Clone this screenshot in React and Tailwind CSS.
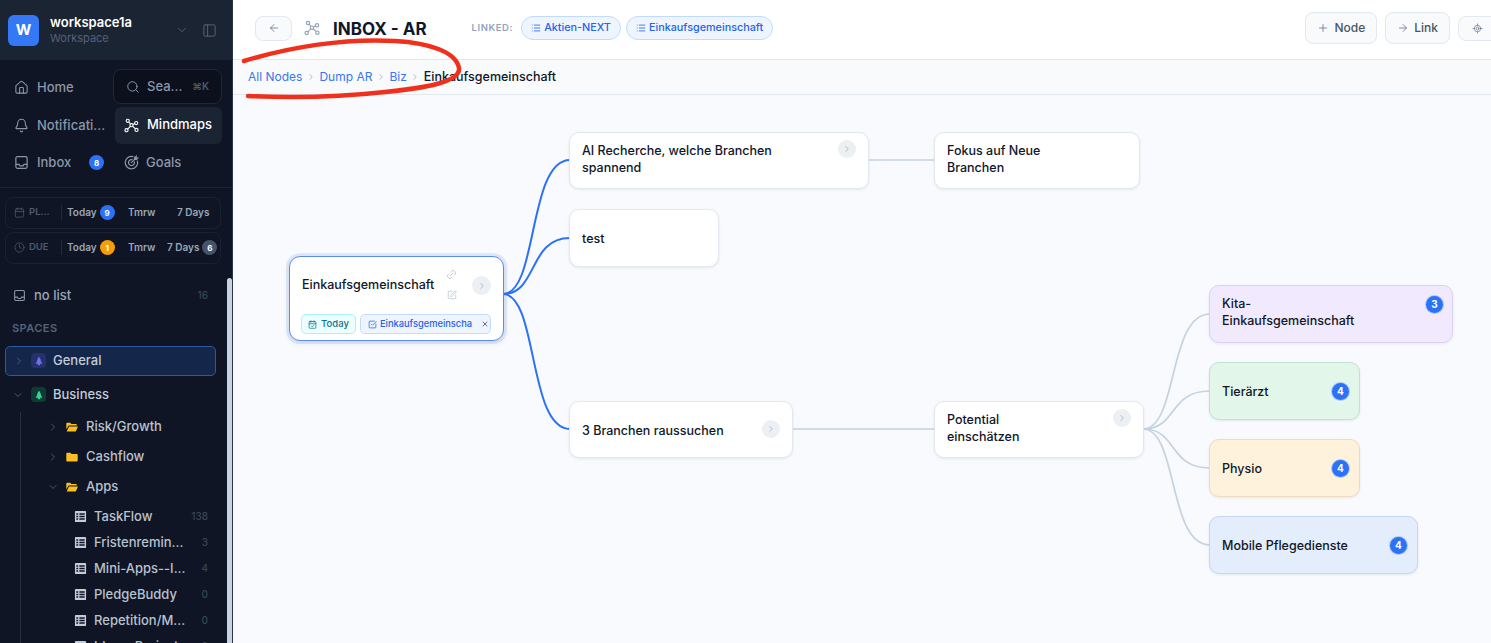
import { ArrowLeft, ArrowRight, Bell, Calendar, CalendarCheck, CheckSquare, ChevronDown, ChevronRight, Clock, Home, Link2, List, LocateFixed, PanelLeft, Plus, Search, SquarePen, X } from 'lucide-react'

function MindmapIcon({ className }) {
  return (
    <svg viewBox="0 0 24 24" fill="none" stroke="currentColor" strokeWidth="1.8" className={className}>
      <circle cx="6" cy="4.5" r="2.5" />
      <circle cx="19.5" cy="8" r="2.5" />
      <circle cx="12" cy="11.5" r="2.5" />
      <circle cx="20" cy="19" r="2.5" />
      <circle cx="4" cy="19.5" r="2.5" />
      <path d="M7.5 6.5l3 3M17.2 9l-2.8 1.4M14 13.5l4 3.6M10.2 13.3l-4.4 4.4" />
    </svg>
  )
}

function TrayIcon({ className }) {
  return (
    <svg viewBox="0 0 16 16" fill="none" stroke="currentColor" strokeWidth="1.3" strokeLinejoin="round" className={className}>
      <rect x="2" y="1.8" width="12" height="12.4" rx="1.6" />
      <path d="M2 10h3.4l1 1.6h3.2l1-1.6H14" />
    </svg>
  )
}

function GoalIcon({ className }) {
  return (
    <svg viewBox="0 0 16 16" fill="none" stroke="currentColor" strokeWidth="1.3" strokeLinecap="round" className={className}>
      <path d="M9.6 1.7A6.6 6.6 0 1 0 14.3 6.4" />
      <path d="M8.6 4.9A3.2 3.2 0 1 0 11.1 7.4" />
      <path d="M7.8 8.2L13 3M11.2 2.8V4.8H13.2L14.8 3.2H13V1.4Z" />
    </svg>
  )
}

function FolderOpenIcon() {
  return (
    <svg viewBox="0 0 16 16" className="ml-[6px] size-[14px] shrink-0">
      <path d="M1.5 4a1 1 0 0 1 1-1h3.4l1.4 1.5h5.2a1 1 0 0 1 1 1V6.4H4.2L1.5 10.5z" fill="#fbbf24" />
      <path d="M4.6 7.4h10.2l-2.2 5.1a1 1 0 0 1-.9.5H1.9z" fill="#fbbf24" />
    </svg>
  )
}

function FolderClosedIcon() {
  return (
    <svg viewBox="0 0 16 16" className="ml-[6px] size-[14px] shrink-0">
      <path d="M1.5 4a1 1 0 0 1 1-1h3.6l1.4 1.6h6a1 1 0 0 1 1 1V12a1 1 0 0 1-1 1h-11a1 1 0 0 1-1-1z" fill="#fbbf24" />
    </svg>
  )
}

function SpaceIcon({ className }) {
  return (
    <svg viewBox="0 0 12 12" className={className} fill="currentColor">
      <path d="M6 .8C7.4 2.2 8 3.8 8.2 5.6L10 9.4H7.4V11H4.6V9.4H2L3.8 5.6C4 3.8 4.6 2.2 6 .8Z" />
    </svg>
  )
}

function TableIcon() {
  return (
    <svg viewBox="0 0 14 14" className="size-[13px] shrink-0 text-[#c3ccd9]" fill="currentColor">
      <path d="M2 1h10a1 1 0 0 1 1 1v10a1 1 0 0 1-1 1H2a1 1 0 0 1-1-1V2a1 1 0 0 1 1-1zm.5 2.4v1.6h2V3.4zm3.3 0v1.6h5.7V3.4zM2.5 6.2v1.6h2V6.2zm3.3 0v1.6h5.7V6.2zM2.5 9v1.6h2V9zm3.3 0v1.6h5.7V9z" fillRule="evenodd" />
    </svg>
  )
}

function NavItem({ icon: Icon, label, badge }) {
  return (
    <div className="flex h-[37.5px] items-center pl-[14px] text-[13px] font-medium text-[#8b97a9]">
      <Icon className="size-[15px] shrink-0" strokeWidth={1.7} />
      <span className="ml-2 truncate">{label}</span>
      {badge && <span className="ml-[18px] grid size-[15px] shrink-0 place-items-center rounded-full bg-[#2b72f6] text-[8px] font-bold text-white">{badge}</span>}
    </div>
  )
}

function DueRow({ icon: Icon, label, today, todayColor, week }) {
  return (
    <div className="flex h-[32px] items-center rounded-lg border border-[#1a2232] pl-2 text-[10px] font-semibold text-[#9aa6b8]">
      <Icon className="size-[11px] shrink-0 text-[#4d596b]" strokeWidth={1.7} />
      <span className="ml-1 w-[32px] text-[9.5px] text-[#4f5b6e]">{label}</span>
      <span className="mr-[5px] h-[15px] w-px bg-[#222b3b]" />
      <span className="flex w-[56px] items-center gap-[3px]">
        Today
        <span className={`grid size-[15px] shrink-0 place-items-center rounded-full text-[8px] font-bold text-white ${todayColor}`}>{today}</span>
      </span>
      <span className="ml-[5px] w-[35px]">Tmrw</span>
      <span className={`flex items-center gap-[3px] ${week ? 'ml-[4px]' : 'ml-[14px]'}`}>
        7 Days
        {week && <span className="grid size-[15px] place-items-center rounded-full bg-[#46536a] text-[8px] font-bold text-white">{week}</span>}
      </span>
    </div>
  )
}

function FolderRow({ label, open, expanded }) {
  const Chev = expanded ? ChevronDown : ChevronRight
  return (
    <div className="flex h-[30px] items-center pl-[47px] text-[13px] font-medium text-[#b9c2cf]">
      <Chev className="size-[12px] text-[#4f5b6e]" strokeWidth={1.8} />
      {open ? <FolderOpenIcon /> : <FolderClosedIcon />}
      <span className="ml-[7px]">{label}</span>
    </div>
  )
}

function ListRow({ label, count }) {
  return (
    <div className="flex h-[26px] items-center pl-[74px] pr-[24px] text-[13px] font-medium text-[#b9c2cf]">
      <TableIcon />
      <span className="ml-[7px] w-[92px] truncate">{label}</span>
      <span className="ml-auto text-[10px] text-[#394557]">{count}</span>
    </div>
  )
}

function Sidebar() {
  return (
    <aside className="relative flex h-[643px] w-[233px] shrink-0 flex-col overflow-hidden border-r border-[#2a3444] bg-[#0f1524]">
      <div className="flex h-[60px] shrink-0 items-center bg-[#1b2433] pl-2 pr-[15px]">
        <div className="grid size-[31px] place-items-center rounded-md bg-[#3478f6] text-[15px] font-bold text-white">W</div>
        <div className="ml-[11px] leading-none">
          <div className="-mt-[1px] text-[13px] font-semibold text-white">workspace1a</div>
          <div className="mt-[4px] text-[11px] text-[#55627a]">Workspace</div>
        </div>
        <ChevronDown className="ml-auto size-[14px] text-[#55627a]" strokeWidth={1.6} />
        <PanelLeft className="ml-[13px] size-[15px] text-[#55627a]" strokeWidth={1.6} />
      </div>

      <div className="grid grid-cols-[113px_109px] border-b border-[#1a2232] pt-[9px] pb-[5px]">
        <NavItem icon={Home} label="Home" />
        <div className="flex h-[35px] items-center rounded-lg border border-[#1f2736] bg-[#0b101c] pl-3 pr-[12px] text-[13px] font-medium text-[#8b97a9]">
          <Search className="size-[14px] shrink-0" strokeWidth={1.7} />
          <span className="ml-[7px]">Sea...</span>
          <span className="ml-auto text-[10px] font-semibold text-[#4f5b6e]">⌘K</span>
        </div>
        <NavItem icon={Bell} label="Notificati..." />
        <div className="ml-[2px] flex h-[37px] items-center rounded-md bg-[#1b2433] pl-[9px] text-[13px] font-medium text-white">
          <MindmapIcon className="size-[15px]" />
          <span className="ml-[8px]">Mindmaps</span>
        </div>
        <NavItem icon={TrayIcon} label="Inbox" badge="8" />
        <div className="flex h-[37.5px] items-center pl-[11px] text-[13px] font-medium text-[#8b97a9]">
          <GoalIcon className="size-[15px]" />
          <span className="ml-[7px]">Goals</span>
        </div>
      </div>

      <div className="flex flex-col gap-[3px] pl-[5px] pr-[11px] pt-[9px]">
        <DueRow icon={Calendar} label="PL..." today="9" todayColor="bg-[#2b72f6]" />
        <DueRow icon={Clock} label="DUE" today="1" todayColor="bg-[#f59e0b]" week="6" />
      </div>

      <div className="mt-[22px] flex h-[22px] items-center pl-[13px] pr-[24px] text-[13px] font-medium text-[#9aa6b8]">
        <TrayIcon className="size-[13px] text-[#8b97a9]" />
        <span className="ml-[8px]">no list</span>
        <span className="ml-auto text-[10px] text-[#394557]">16</span>
      </div>
      <div className="ml-3 mt-[15px] text-[11px] font-semibold tracking-[0.04em] text-[#55627a]">SPACES</div>

      <div className="ml-[5px] mt-[9px] flex h-[30px] w-[211px] shrink-0 items-center rounded-[5px] border border-[#2c5a9e] bg-[#14264a] pl-[7px] text-[13px] font-medium text-[#c3ccd9]">
        <ChevronRight className="size-[12px] text-[#55627a]" strokeWidth={1.8} />
        <span className="ml-[6px] grid size-[15px] place-items-center rounded-[4px] bg-[#26306a]">
          <SpaceIcon className="size-[10px] text-[#6d6ef0]" />
        </span>
        <span className="ml-[7px]">General</span>
      </div>
      <div className="mt-[3px] flex h-[32px] shrink-0 items-center pl-[12px] text-[13px] font-medium text-[#c3ccd9]">
        <ChevronDown className="size-[12px] text-[#55627a]" strokeWidth={1.8} />
        <span className="ml-[7px] grid size-[15px] place-items-center rounded-[4px] bg-[#103b35]">
          <SpaceIcon className="size-[10px] text-[#34d399]" />
        </span>
        <span className="ml-[7px]">Business</span>
      </div>

      <div className="ml-5 mt-px border-l border-[#263043] [&>*]:-ml-[21px]">
        <FolderRow label="Risk/Growth" open />
        <FolderRow label="Cashflow" />
        <FolderRow label="Apps" open expanded />
        <div className="h-[2px]" />
        <ListRow label="TaskFlow" count="138" />
        <ListRow label="Fristenremin..." count="3" />
        <ListRow label="Mini-Apps--I..." count="4" />
        <ListRow label="PledgeBuddy" count="0" />
        <ListRow label="Repetition/M..." count="0" />
        <ListRow label="Ideen-Project" count="2" />
      </div>

      <div className="absolute right-0 top-[278px] h-[365px] w-[5px] rounded-t-full bg-[#c7d3e3]" />
    </aside>
  )
}

function Pill({ label }) {
  return (
    <span className="flex h-[24px] items-center gap-[3px] rounded-full border border-[#bfdbfe] bg-[#eff5ff] px-[9px] text-[10.8px] font-medium text-[#2563eb]">
      <List className="size-[10px]" strokeWidth={2} />
      {label}
    </span>
  )
}

function TopButton({ icon: Icon, label }) {
  return (
    <button className="flex h-[32px] items-center gap-[5px] rounded-lg border border-[#e2e8f0] bg-[#f8fafc] px-[11px] text-[12px] font-medium text-[#475569]">
      <Icon className="size-[12px] text-[#64748b]" strokeWidth={1.6} />
      {label}
    </button>
  )
}

function Header() {
  return (
    <header className="flex h-[60px] shrink-0 items-center border-b border-[#e2e8f0] bg-white pb-[3px] pl-[22px]">
      <button className="grid h-[25px] w-[37px] place-items-center rounded-lg border border-[#e2e8f0] bg-[#f8fafc]">
        <ArrowLeft className="size-[12px] text-[#64748b]" strokeWidth={1.6} />
      </button>
      <MindmapIcon className="ml-[12px] size-[16px] text-[#94a3b8]" />
      <h1 className="ml-[13px] translate-y-[2px] text-[17px] font-bold text-[#0f172a]">INBOX - AR</h1>
      <span className="ml-[45px] text-[9.5px] font-semibold tracking-[0.06em] text-[#94a3b8]">LINKED:</span>
      <div className="ml-[8px] flex gap-[5px]">
        <Pill label="Aktien-NEXT" />
        <Pill label="Einkaufsgemeinschaft" />
      </div>
      <div className="ml-auto flex items-center gap-2 overflow-hidden">
        <TopButton icon={Plus} label="Node" />
        <TopButton icon={ArrowRight} label="Link" />
        <button className="-mr-[5px] grid h-[25px] w-[38px] place-items-center rounded-l-lg border border-[#e2e8f0] bg-[#f8fafc]">
          <LocateFixed className="size-[11px] text-[#64748b]" strokeWidth={1.6} />
        </button>
      </div>
    </header>
  )
}

function Crumbs() {
  return (
    <nav className="flex h-[35px] shrink-0 items-center gap-[3.5px] border-b border-[#e2e8f0] bg-[#f8fafc] pl-[15px] text-[12px]">
      <span className="text-[#3b76f0]">All Nodes</span>
      <ChevronRight className="size-[10px] text-[#a8b3c2]" />
      <span className="text-[#3b76f0]">Dump AR</span>
      <ChevronRight className="size-[10px] text-[#a8b3c2]" />
      <span className="text-[#3b76f0]">Biz</span>
      <ChevronRight className="size-[10px] text-[#a8b3c2]" />
      <span className="text-[12.5px] font-medium text-[#0f172a]">Einkaufsgemeinschaft</span>
    </nav>
  )
}

function Expand({ className }) {
  return (
    <span className={`absolute grid size-[18px] place-items-center rounded-full bg-[#eceff4] ${className}`}>
      <ChevronRight className="size-[10px] text-[#94a3b8]" strokeWidth={1.6} />
    </span>
  )
}

function Count({ n, className }) {
  return (
    <span className={`absolute box-content grid size-[17px] place-items-center rounded-full border border-white/60 bg-[#2b72f6] text-[10px] font-bold text-white ${className}`}>{n}</span>
  )
}

function Node({ x, y, w, h, tone, children }) {
  return (
    <div
      className={`absolute flex items-center rounded-[10px] border pl-[12px] text-[12.5px] font-medium leading-[17px] text-[#0f172a] shadow-[0_1px_3px_rgba(15,23,42,0.08)] ${tone || 'border-[#e2e8f0] bg-white'}`}
      style={{ left: x, top: y, width: w, height: h }}
    >
      {children}
    </div>
  )
}

function Canvas() {
  return (
    <div className="relative min-h-0 flex-1 overflow-hidden bg-[#f8fafd]">
      <svg className="absolute inset-0 h-full w-full" fill="none">
        <g stroke="#2b72f6" strokeWidth="2">
          <path d="M270 199C305 199 295 65 337 65" />
          <path d="M270 199C305 199 295 143 337 143" />
          <path d="M270 199C305 199 295 334 337 334" />
        </g>
        <g stroke="#c5d2e0" strokeWidth="1.7">
          <path d="M635 65H702" />
          <path d="M559 334H702" />
          <path d="M910 334C945 334 935 219 977 219" />
          <path d="M910 334C945 334 935 296 977 296" />
          <path d="M910 334C945 334 935 373 977 373" />
          <path d="M910 334C945 334 935 450 977 450" />
        </g>
      </svg>

      {/* nodo raíz */}
      <div className="absolute left-[56px] top-[161px] h-[85px] w-[215px] rounded-[11px] border-[1.5px] border-[#5b8def] bg-white shadow-[0_0_0_3px_rgba(59,118,240,0.12),0_2px_6px_rgba(15,23,42,0.1)]">
        <span className="absolute left-[12px] top-[19px] text-[12.5px] font-medium leading-[17px] text-[#0f172a]">Einkaufsgemeinschaft</span>
        <Link2 className="absolute left-[156px] top-[12px] size-[11px] -rotate-45 text-[#b4bfcc]" strokeWidth={1.7} />
        <SquarePen className="absolute left-[157px] top-[33px] size-[10px] text-[#b4bfcc]" strokeWidth={1.7} />
        <Expand className="left-[182px] top-[19px] size-[19px]" />
        <div className="absolute left-[11px] top-[57px] flex gap-1">
          <span className="flex h-[20px] w-[55px] items-center justify-center gap-1 rounded-[5px] border border-[#a5f3fc] bg-[#ecfeff] text-[9.5px] font-medium text-[#0e7490]">
            <CalendarCheck className="size-[9px]" />
            Today
          </span>
          <span className="flex h-[20px] w-[131px] items-center rounded-[5px] border border-[#bfdbfe] bg-[#eff5ff] pl-[7px] text-[9.3px] font-medium text-[#2563eb]">
            <CheckSquare className="size-[9px] shrink-0" />
            <span className="ml-[3px] w-[93px] whitespace-nowrap">Einkaufsgemeinscha</span>
            <X className="ml-[8px] size-[8px] text-[#64748b]" strokeWidth={3} />
          </span>
        </div>
      </div>

      <Node x={336} y={37} w={300} h={57}>
        <span className="w-[210px] -translate-y-[2px]">AI Recherche, welche Branchen spannend</span>
        <Expand className="left-[268px] top-[7px]" />
      </Node>
      <Node x={701} y={37} w={206} h={57}>
        <span className="w-[120px] -translate-y-[2px]">Fokus auf Neue Branchen</span>
      </Node>
      <Node x={336} y={114} w={150} h={58}>test</Node>
      <Node x={336} y={306} w={224} h={57}>
        <span className="translate-y-px">3 Branchen raussuchen</span>
        <Expand className="left-[192px] top-[18px]" />
      </Node>
      <Node x={701} y={306} w={210} h={57}>
        <span className="w-[90px] -translate-y-[2px]">Potential einschätzen</span>
        <Expand className="left-[178px] top-[7px]" />
      </Node>
      <Node x={976} y={190} w={244} h={58} tone="border-[#ddd0f5] bg-[#f1e9fd]">
        <span className="w-[150px] -translate-y-[2px]">Kita-<br />Einkaufsgemeinschaft</span>
        <Count n="3" className="left-[215px] top-[9px]" />
      </Node>
      <Node x={976} y={267} w={151} h={58} tone="border-[#bfe3cf] bg-[#e2f6e9]">
        Tierärzt
        <Count n="4" className="left-[121px] top-[19px]" />
      </Node>
      <Node x={976} y={344} w={151} h={58} tone="border-[#efdcbc] bg-[#fff2dd]">
        Physio
        <Count n="4" className="left-[121px] top-[19px]" />
      </Node>
      <Node x={976} y={421} w={209} h={58} tone="border-[#c5d7f3] bg-[#e4edfc]">
        Mobile Pflegedienste
        <Count n="4" className="left-[179px] top-[19px]" />
      </Node>
    </div>
  )
}

export default function App() {
  return (
    <div className="relative flex h-[643px] w-[1491px] overflow-hidden bg-white font-['Inter',sans-serif]">
      <Sidebar />
      <main className="flex min-w-0 flex-1 flex-col">
        <Header />
        <Crumbs />
        <Canvas />
      </main>
      {/* anotación a mano sobre la captura */}
      <svg className="pointer-events-none absolute inset-0 h-full w-full" fill="none">
        <path
          d="M244 61C290 47 345 38 395 41C430 43 456 52 459 68C461 82 425 88 385 92C340 97 290 98 248 96"
          stroke="#f0301c"
          strokeWidth="4.5"
          strokeLinecap="round"
        />
      </svg>
    </div>
  )
}
